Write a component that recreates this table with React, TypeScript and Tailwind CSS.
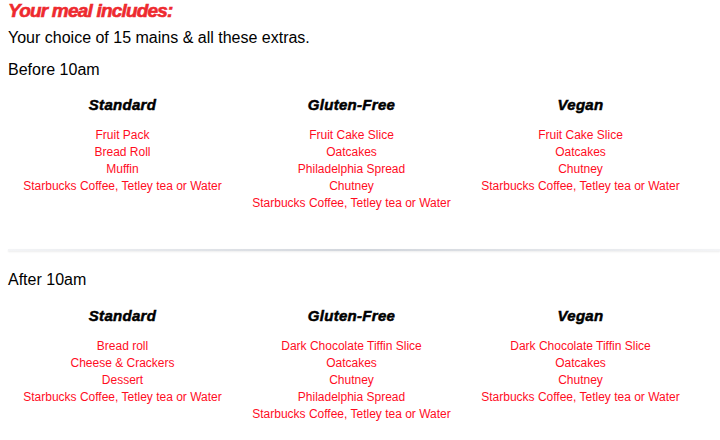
const columnsBefore = [
  {
    title: "Standard",
    items: ["Fruit Pack", "Bread Roll", "Muffin", "Starbucks Coffee, Tetley tea or Water"],
  },
  {
    title: "Gluten-Free",
    items: [
      "Fruit Cake Slice",
      "Oatcakes",
      "Philadelphia Spread",
      "Chutney",
      "Starbucks Coffee, Tetley tea or Water",
    ],
  },
  {
    title: "Vegan",
    items: ["Fruit Cake Slice", "Oatcakes", "Chutney", "Starbucks Coffee, Tetley tea or Water"],
  },
];

const columnsAfter = [
  {
    title: "Standard",
    items: ["Bread roll", "Cheese & Crackers", "Dessert", "Starbucks Coffee, Tetley tea or Water"],
  },
  {
    title: "Gluten-Free",
    items: [
      "Dark Chocolate Tiffin Slice",
      "Oatcakes",
      "Chutney",
      "Philadelphia Spread",
      "Starbucks Coffee, Tetley tea or Water",
    ],
  },
  {
    title: "Vegan",
    items: [
      "Dark Chocolate Tiffin Slice",
      "Oatcakes",
      "Chutney",
      "Starbucks Coffee, Tetley tea or Water",
    ],
  },
];

type Column = { title: string; items: string[] };

const MealGrid = ({ columns }: { columns: Column[] }) => (
  <div className="grid grid-cols-3 w-[687px]">
    {columns.map((col) => (
      <div key={col.title} className="flex flex-col items-center text-center">
        <h3 className="font-bold italic text-[15px] leading-[18px] tracking-[0.3px] text-black [-webkit-text-stroke:0.5px_black]">
          {col.title}
        </h3>
        <ul className="mt-[13px] text-[12px] leading-[17px] text-[#ff0d1f]">
          {col.items.map((item) => (
            <li key={item}>{item}</li>
          ))}
        </ul>
      </div>
    ))}
  </div>
);

export default function App() {
  return (
    <div className="w-[720px] h-[440px] bg-white overflow-hidden pl-[8px] font-['Liberation_Sans',Arial,sans-serif] text-black">
      <h2 className="font-bold italic text-[19px] leading-[21px] tracking-[-0.8px] text-[#ee2a2f] [-webkit-text-stroke:0.6px_#ee2a2f]">
        Your meal includes:
      </h2>
      <p className="text-[16px] leading-[20px] mt-[7px]">Your choice of 15 mains &amp; all these extras.</p>
      <p className="text-[16px] leading-[20px] mt-[12px]">Before 10am</p>
      <div className="mt-[16px]">
        <MealGrid columns={columnsBefore} />
      </div>
      <div className="mt-[37px] h-[2px] bg-gradient-to-r from-gray-100 via-gray-300 to-gray-100 shadow-[0_1px_2px_rgba(0,0,0,0.08)]" />
      <p className="text-[16px] leading-[20px] mt-[19px]">After 10am</p>
      <div className="mt-[17px]">
        <MealGrid columns={columnsAfter} />
      </div>
    </div>
  );
}
